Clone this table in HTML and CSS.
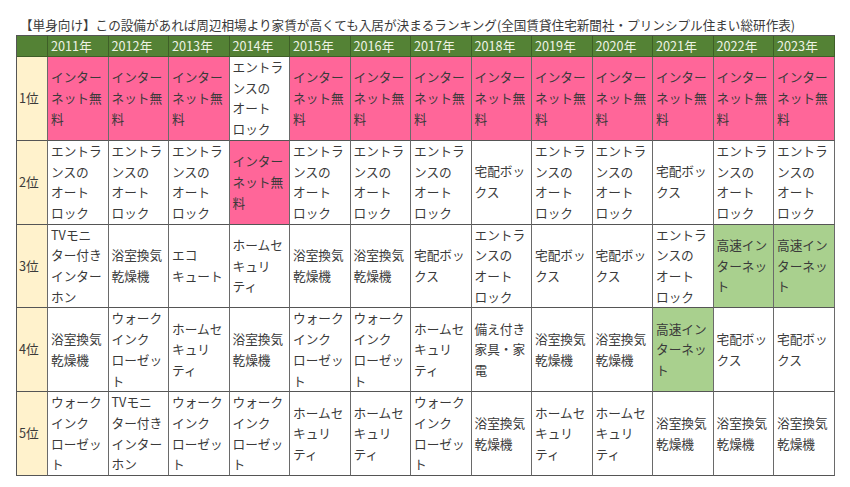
FILE: index.html
```html
<!DOCTYPE html>
<html lang="ja">
<head>
<meta charset="utf-8">
<title>単身向け 設備ランキング</title>
<link rel="stylesheet" href="styles.css">
</head>
<body>
<div class="page">
  <div class="title">【単身向け】この設備があれば周辺相場より家賃が高くても入居が決まるランキング(全国賃貸住宅新聞社・プリンシプル住まい総研作表)</div>
  <div class="table">
    <div class="cell head"></div>
    <div class="cell head">2011年</div>
    <div class="cell head">2012年</div>
    <div class="cell head">2013年</div>
    <div class="cell head">2014年</div>
    <div class="cell head">2015年</div>
    <div class="cell head">2016年</div>
    <div class="cell head">2017年</div>
    <div class="cell head">2018年</div>
    <div class="cell head">2019年</div>
    <div class="cell head">2020年</div>
    <div class="cell head">2021年</div>
    <div class="cell head">2022年</div>
    <div class="cell head">2023年</div>

    <div class="cell rank">1位</div>
    <div class="cell pink">インター<br>ネット無<br>料</div>
    <div class="cell pink">インター<br>ネット無<br>料</div>
    <div class="cell pink">インター<br>ネット無<br>料</div>
    <div class="cell">エントラ<br>ンスの<br>オート<br>ロック</div>
    <div class="cell pink">インター<br>ネット無<br>料</div>
    <div class="cell pink">インター<br>ネット無<br>料</div>
    <div class="cell pink">インター<br>ネット無<br>料</div>
    <div class="cell pink">インター<br>ネット無<br>料</div>
    <div class="cell pink">インター<br>ネット無<br>料</div>
    <div class="cell pink">インター<br>ネット無<br>料</div>
    <div class="cell pink">インター<br>ネット無<br>料</div>
    <div class="cell pink">インター<br>ネット無<br>料</div>
    <div class="cell pink">インター<br>ネット無<br>料</div>

    <div class="cell rank">2位</div>
    <div class="cell">エントラ<br>ンスの<br>オート<br>ロック</div>
    <div class="cell">エントラ<br>ンスの<br>オート<br>ロック</div>
    <div class="cell">エントラ<br>ンスの<br>オート<br>ロック</div>
    <div class="cell pink">インター<br>ネット無<br>料</div>
    <div class="cell">エントラ<br>ンスの<br>オート<br>ロック</div>
    <div class="cell">エントラ<br>ンスの<br>オート<br>ロック</div>
    <div class="cell">エントラ<br>ンスの<br>オート<br>ロック</div>
    <div class="cell">宅配ボッ<br>クス</div>
    <div class="cell">エントラ<br>ンスの<br>オート<br>ロック</div>
    <div class="cell">エントラ<br>ンスの<br>オート<br>ロック</div>
    <div class="cell">宅配ボッ<br>クス</div>
    <div class="cell">エントラ<br>ンスの<br>オート<br>ロック</div>
    <div class="cell">エントラ<br>ンスの<br>オート<br>ロック</div>

    <div class="cell rank">3位</div>
    <div class="cell">TVモニ<br>ター付き<br>インター<br>ホン</div>
    <div class="cell">浴室換気<br>乾燥機</div>
    <div class="cell">エコ<br>キュート</div>
    <div class="cell">ホームセ<br>キュリ<br>ティ</div>
    <div class="cell">浴室換気<br>乾燥機</div>
    <div class="cell">浴室換気<br>乾燥機</div>
    <div class="cell">宅配ボッ<br>クス</div>
    <div class="cell">エントラ<br>ンスの<br>オート<br>ロック</div>
    <div class="cell">宅配ボッ<br>クス</div>
    <div class="cell">宅配ボッ<br>クス</div>
    <div class="cell">エントラ<br>ンスの<br>オート<br>ロック</div>
    <div class="cell green">高速イン<br>ターネッ<br>ト</div>
    <div class="cell green">高速イン<br>ターネッ<br>ト</div>

    <div class="cell rank">4位</div>
    <div class="cell">浴室換気<br>乾燥機</div>
    <div class="cell">ウォーク<br>インク<br>ローゼッ<br>ト</div>
    <div class="cell">ホームセ<br>キュリ<br>ティ</div>
    <div class="cell">浴室換気<br>乾燥機</div>
    <div class="cell">ウォーク<br>インク<br>ローゼッ<br>ト</div>
    <div class="cell">ウォーク<br>インク<br>ローゼッ<br>ト</div>
    <div class="cell">ホームセ<br>キュリ<br>ティ</div>
    <div class="cell">備え付き<br>家具・家<br>電</div>
    <div class="cell">浴室換気<br>乾燥機</div>
    <div class="cell">浴室換気<br>乾燥機</div>
    <div class="cell green">高速イン<br>ターネッ<br>ト</div>
    <div class="cell">宅配ボッ<br>クス</div>
    <div class="cell">宅配ボッ<br>クス</div>

    <div class="cell rank">5位</div>
    <div class="cell">ウォーク<br>インク<br>ローゼッ<br>ト</div>
    <div class="cell">TVモニ<br>ター付き<br>インター<br>ホン</div>
    <div class="cell">ウォーク<br>インク<br>ローゼッ<br>ト</div>
    <div class="cell">ウォーク<br>インク<br>ローゼッ<br>ト</div>
    <div class="cell">ホームセ<br>キュリ<br>ティ</div>
    <div class="cell">ホームセ<br>キュリ<br>ティ</div>
    <div class="cell">ウォーク<br>インク<br>ローゼッ<br>ト</div>
    <div class="cell">浴室換気<br>乾燥機</div>
    <div class="cell">ホームセ<br>キュリ<br>ティ</div>
    <div class="cell">ホームセ<br>キュリ<br>ティ</div>
    <div class="cell">浴室換気<br>乾燥機</div>
    <div class="cell">浴室換気<br>乾燥機</div>
    <div class="cell">浴室換気<br>乾燥機</div>
  </div>
</div>
</body>
</html>
```
FILE: styles.css
```css
* { box-sizing: border-box; }
html, body { margin: 0; padding: 0; background: #ffffff; }
body {
  font-family: "Noto Sans CJK JP", "Noto Sans", sans-serif;
  color: #3a3a3a;
  font-size: 12.7px;
}
.page {
  padding: 0 16px 0 16px;
  width: 850px;
}
.title {
  height: 35px;
  padding: 15px 0 0 4px;
  line-height: 20px;
  white-space: nowrap;
  color: #3a3a3a;
  font-size: 12.6px;
}
.table {
  display: grid;
  grid-template-columns: 31px repeat(13, 60.5px);
  grid-template-rows: 21px repeat(5, 83.8px);
  border-top: 1px solid #555555;
  border-left: 1px solid #555555;
  width: max-content;
}
.cell {
  display: flex;
  flex-direction: column;
  justify-content: center;
  padding: 0 2px 0 3px;
  line-height: 20.7px;
  border-right: 1.5px solid #6a6a6a;
  border-bottom: 1px solid #555555;
  white-space: nowrap;
  overflow: hidden;
  background: #ffffff;
}
.head {
  background: #548235;
  color: #eef3e6;
  border-right-color: #3e5f27;
  border-bottom-color: #3e5f27;
}
.rank {
  background: #fff2cc;
  padding-left: 2px;
}
.pink { background: #ff6699; }
.green { background: #a9d08e; }
```
